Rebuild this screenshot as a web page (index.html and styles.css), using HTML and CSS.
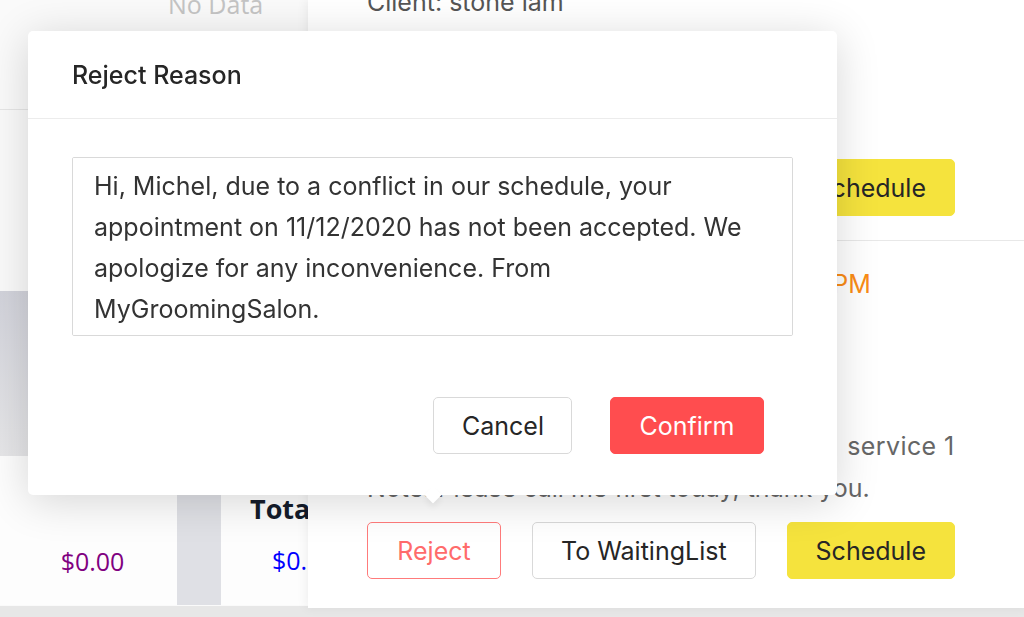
FILE: index.html
```html
<!DOCTYPE html>
<html lang="en">
<head>
  <meta charset="UTF-8">
  <meta name="viewport" content="width=device-width, initial-scale=1.0">
  <title>Appointments – Reject Reason</title>
  <link rel="stylesheet" href="styles.css">
</head>
<body>
  <div class="page">
    <aside class="summary">
      <div class="summary-empty">No Data</div>
      <div class="summary-band"></div>
      <div class="summary-totals">
        <div class="total-cell total-sub amount-purple">$0.00</div>
        <div class="total-gap"></div>
        <div class="total-cell total-main">
          <div class="total-label">Total</div>
          <div class="amount-blue">$0.00</div>
        </div>
      </div>
    </aside>

    <main class="requests">
      <section class="request request-top">
        <div class="client">Client: stone lam</div>
        <div class="actions">
          <button class="btn btn-schedule">Schedule</button>
        </div>
      </section>

      <section class="request request-current">
        <div class="time">Date: Thursday, 11/12/2020 from 03:00 PM</div>
        <div class="detail detail-services">
          <span>Services:</span>
          <span class="service-list">
            <span>Bath &amp; Brush</span>
            <span>service 1</span>
          </span>
        </div>
        <div class="detail detail-note">Note: Please call me first today, thank you.</div>
        <div class="actions">
          <button class="btn btn-reject">Reject</button>
          <button class="btn">To WaitingList</button>
          <button class="btn btn-schedule">Schedule</button>
        </div>
      </section>
    </main>
  </div>

  <div class="popconfirm">
    <div class="popconfirm-title">Reject Reason</div>
    <div class="popconfirm-body">
      <textarea class="reason" rows="4">Hi, Michel, due to a conflict in our schedule, your appointment on 11/12/2020 has not been accepted. We apologize for any inconvenience. From MyGroomingSalon.</textarea>
    </div>
    <div class="popconfirm-footer">
      <button class="btn">Cancel</button>
      <button class="btn btn-danger">Confirm</button>
    </div>
    <span class="popconfirm-arrow"></span>
  </div>
</body>
</html>
```

FILE: styles.css
```css
:root {
  --text: #262626;
  --muted: #666;
  --border: #d9d9d9;
  --danger: #ff4d4f;
  --yellow: #f5e33d;
}

* {
  box-sizing: border-box;
  margin: 0;
  padding: 0;
}

body {
  background: #e7e7e7;
  font-family: 'Inter', 'Liberation Sans', sans-serif;
  color: var(--text);
  overflow: hidden;
  height: 617px;
}

.page {
  display: flex;
  align-items: flex-start;
  height: 606px;
}

/* left summary column */
.summary {
  width: 308px;
  flex-shrink: 0;
  height: 606px;
  overflow: hidden;
  background: #fafafa;
  font-family: 'Open Sans', sans-serif;
}

.summary-empty {
  margin-top: -12px;
  height: 122px;
  padding-left: 168px;
  border-bottom: 1px solid #e6e6e6;
  font-size: 25px;
  line-height: 32px;
  color: #c4c4c4;
}

.summary-band {
  margin-top: 181px;
  height: 165px;
  background: linear-gradient(#d2d3db, #e6e6e8);
}

.summary-totals {
  display: grid;
  grid-template-columns: 177px 44px 1fr;
  height: 149px;
  background: #fdfdfd;
}

.total-cell {
  font-size: 25px;
  padding-top: 88px;
  text-align: center;
}

.total-sub {
  padding-left: 8px;
}

.total-gap {
  background: #dfe0e5;
}

.total-main {
  padding: 34px 0 0 29px;
  text-align: left;
  white-space: nowrap;
}

.total-label {
  font-size: 27px;
  font-weight: 700;
  color: #141c2b;
  margin-bottom: 16px;
}

.total-main .amount-blue {
  padding-left: 22px;
}

.amount-purple { color: #800080; }
.amount-blue { color: #0000ff; }

/* right list of requests */
.requests {
  flex: 1;
  height: 608px;
  background: #fff;
  box-shadow: -2px 0 10px rgba(0, 0, 0, 0.06);
  font-size: 25px;
}

.request {
  display: flow-root;
  padding: 0 72px 0 59px;
}

.request-top {
  height: 241px;
  border-bottom: 1px solid #e8e8e8;
}

.client {
  margin-top: -13px;
  line-height: 30px;
  color: #555;
}

.actions {
  display: flex;
  justify-content: flex-end;
  gap: 31px;
}

.request-top .actions {
  margin-top: 142px;
}

.request-current {
  padding-top: 27px;
}

.request-current .actions {
  justify-content: flex-start;
  margin-top: 13px;
}

.request-current .btn-schedule {
  margin-left: auto;
}

.time {
  color: #fa8c16;
  line-height: 32px;
  white-space: nowrap;
}

.detail {
  color: var(--muted);
  line-height: 43px;
  white-space: nowrap;
}

.detail-services {
  display: flex;
  justify-content: space-between;
  margin-top: 125px;
}

.service-list {
  display: flex;
  gap: 16px;
  letter-spacing: 0.4px;
}

.detail-note {
  line-height: 41px;
}

.btn {
  font: inherit;
  font-size: 25px;
  height: 57px;
  padding: 0 28px;
  border: 1px solid var(--border);
  border-radius: 5px;
  background: #fff;
  color: var(--text);
  white-space: nowrap;
  flex-shrink: 0;
  cursor: pointer;
}

.btn-schedule {
  background: var(--yellow);
  border-color: var(--yellow);
  width: 168px;
}

.btn-reject {
  border-color: #ff7b7b;
  color: #ff6b6b;
  width: 134px;
}

.btn-danger {
  background: var(--danger);
  border-color: var(--danger);
  color: #fff;
}

/* reject reason popconfirm */
.popconfirm {
  position: absolute;
  left: 28px;
  top: 31px;
  width: 809px;
  height: 464px;
  background: #fff;
  border-radius: 5px;
  box-shadow: 0 6px 44px rgba(0, 0, 0, 0.16);
}

.popconfirm-title {
  height: 88px;
  padding: 0 44px;
  display: flex;
  align-items: center;
  font-size: 25px;
  font-weight: 500;
  border-bottom: 1px solid #ececec;
}

.popconfirm-body {
  padding: 38px 44px 0;
}

.reason {
  display: block;
  width: 721px;
  height: 179px;
  padding: 8px 12px 8px 21px;
  border: 1px solid var(--border);
  border-radius: 2px;
  font: inherit;
  font-size: 25px;
  line-height: 41px;
  color: #333;
  resize: none;
}

.popconfirm-footer {
  display: flex;
  justify-content: flex-end;
  gap: 38px;
  padding: 61px 73px 0 0;
}

.popconfirm-footer .btn {
  width: 139px;
}

.popconfirm-footer .btn-danger {
  width: 154px;
}

.popconfirm-arrow {
  position: absolute;
  left: 399px;
  bottom: -6px;
  width: 12px;
  height: 12px;
  background: #fff;
  transform: rotate(45deg);
  box-shadow: 3px 3px 6px rgba(0, 0, 0, 0.06);
}
```
